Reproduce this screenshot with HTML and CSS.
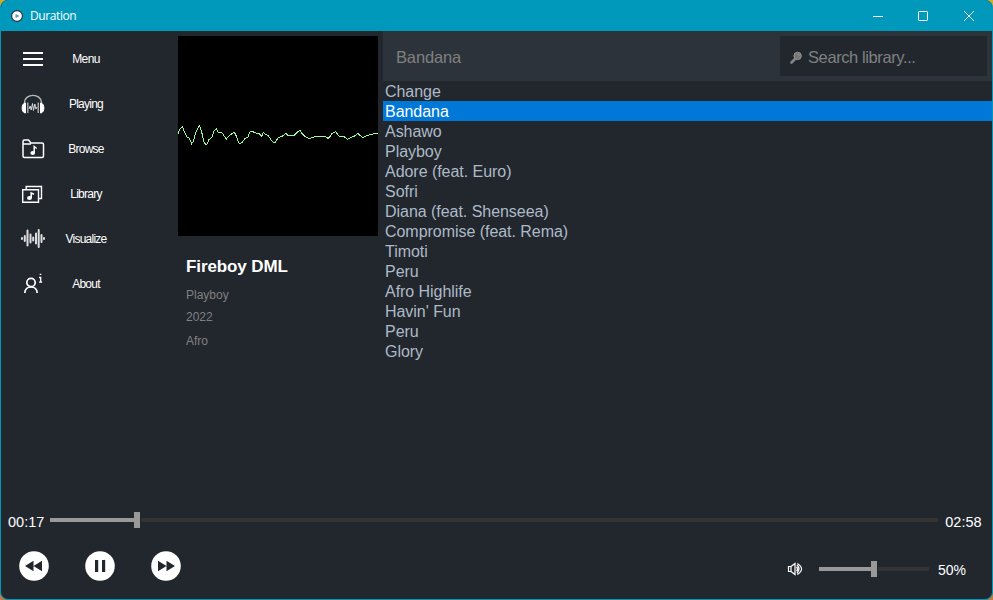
FILE: index.html
```html
<!DOCTYPE html>
<html lang="en">
<head>
<meta charset="utf-8">
<title>Duration</title>
<link rel="stylesheet" href="styles.css">
</head>
<body>
<div class="window">
  <header class="titlebar">
    <svg class="app-icon" width="12" height="12" viewBox="0 0 12 12"><circle cx="6" cy="6" r="5.4" fill="#fff" stroke="#222b33" stroke-width="1.1"/><path d="M4.500 3.700 8.500 6 4.500 8.300Z" fill="#609bc9"/></svg>
    <span class="title">Duration</span>
    <svg class="controls" width="102" height="12" viewBox="0 0 102 12" fill="none" stroke="#fff"><path d="M0 6.500h10"/><rect x="45.500" y="1.500" width="9" height="9" rx=".7"/><path d="M91 1l10 10M101 1l-10 10"/></svg>
  </header>
  <main class="content">
    <nav class="sidebar">
      <a class="nav-item"><svg width="26" height="26" viewBox="0 0 26 26" stroke="#fff" stroke-width="2"><path d="M3 7h20M3 13h20M3 19h20"/></svg><span>Menu</span></a>
      <a class="nav-item"><svg width="26" height="26" viewBox="0 0 26 26" fill="none" stroke="#fff"><path d="M4.500 14v-2.500C5 2 21 2 21.500 11.500V14" stroke="#b5b8bb" stroke-width="1.400"/><path d="M5.500 12c-4.500 0-4.500 10 0 10ZM20.500 12c4.500 0 4.500 10 0 10Z" fill="#fff"/><path d="M7.800 11.500v10.500M18.200 11.500v10.500" stroke="#c5c7c9" stroke-width="1.200"/><path d="M9 18l1.200-3 1 4 1.300-6.500 1 7 1.300-6.500 1.200 5 1-2" stroke="#d5d7d9"/></svg><span>Playing</span></a>
      <a class="nav-item"><svg width="26" height="26" viewBox="0 0 26 26" fill="none" stroke="#fff" stroke-width="1.500"><path d="M3 8V5.500q0-1.500 1.500-1.500h4l2.500 3h11q1.500 0 1.500 1.500v11.500q0 1.500-1.500 1.500h-17.500q-1.500 0-1.500-1.500V8h8"/><ellipse cx="12.700" cy="17" rx="2.300" ry="2" fill="#fff" stroke="none"/><path d="M14.200 17v-6.500l2.500 2"/></svg><span>Browse</span></a>
      <a class="nav-item"><svg width="26" height="26" viewBox="0 0 26 26" fill="none" stroke="#fff" stroke-width="1.400"><path d="M6.200 8.500V5.500h15.300v12h-3M2.700 8.700h15.800v12.600H2.700Z"/><ellipse cx="9.500" cy="17" rx="2.500" ry="2" fill="#fff" stroke="none"/><path d="M11.200 17v-5l2.800 1.200" stroke-width="1.600"/></svg><span>Library</span></a>
      <a class="nav-item"><svg width="26" height="26" viewBox="0 0 26 26" stroke="#ddd" stroke-width="2" stroke-linecap="round"><path d="M2 12v1M4.800 10v5M7.500 4.500v15M10.500 8.500v8M13.200 11.500v3M16 7.500v10M18.700 4v17M21.500 9v7M24 12v1"/></svg><span>Visualize</span></a>
      <a class="nav-item"><svg width="26" height="26" viewBox="0 0 26 26" fill="none" stroke="#fff" stroke-width="1.700"><circle cx="11" cy="11.500" r="4.200"/><path d="M4.800 22c.3-8 12.100-8 12.400 0"/><path d="M19 6.500h1.700v4.700M19 11.200h3.200M19.700 3.300h1.600" stroke-width="1.300"/></svg><span>About</span></a>
    </nav>
    <section class="now-playing">
      <svg class="scope" width="200" height="200" viewBox="12 18 600 600"><polyline fill="none" stroke="#98fb98" stroke-width="3" shape-rendering="crispEdges" points="12,312 18,296 25,290 30,302 38,320 46,325 53,341 58,335 66,305 70,297 76,287 82,302 90,335 95,344 100,342 104,330 114,322 120,303 127,296 133,308 145,309 150,318 157,327 165,318 172,312 181,307 188,320 193,337 198,341 205,337 213,325 222,321 228,305 235,304 242,308 255,311 263,319 268,308 274,313 283,317 290,328 298,337 304,337 311,325 320,320 328,317 335,310 342,317 350,318 360,317 368,308 378,301 385,312 395,321 406,326 415,323 430,318 455,320 462,325 468,320 473,311 485,305 494,318 512,321 520,328 530,323 540,319 552,310 560,318 567,323 580,316 590,314 600,311 612,311"/></svg>
      <h1 class="artist">Fireboy DML</h1>
      <p class="meta">Playboy</p>
      <p class="meta">2022</p>
      <p class="meta genre">Afro</p>
    </section>
    <section class="library">
      <div class="toolbar">
        <span class="current">Bandana</span>
        <div class="search">
          <svg width="12" height="13" viewBox="0 0 12 13"><path d="M1.500 11.500 6 7" stroke="#858585" stroke-width="2.600" stroke-linecap="round"/><circle cx="7.600" cy="4.900" r="3.700" fill="#777" stroke="#929292"/><path d="M7.500 3q2 0 2 2" stroke="#a58b8b" fill="none"/></svg>
          <span>Search library...</span>
        </div>
      </div>
      <ul class="songs">
        <li>Change</li>
        <li class="selected">Bandana</li>
        <li>Ashawo</li>
        <li>Playboy</li>
        <li>Adore (feat. Euro)</li>
        <li>Sofri</li>
        <li>Diana (feat. Shenseea)</li>
        <li>Compromise (feat. Rema)</li>
        <li>Timoti</li>
        <li>Peru</li>
        <li>Afro Highlife</li>
        <li>Havin' Fun</li>
        <li>Peru</li>
        <li>Glory</li>
      </ul>
    </section>
  </main>
  <footer class="player">
    <div class="progress">
      <span class="time">00:17</span>
      <div class="slider seek"><i class="fill"></i><i class="thumb"></i><i class="rest"></i></div>
      <span class="time">02:58</span>
    </div>
    <div class="transport">
      <svg width="30" height="30" viewBox="0 0 30 30"><circle cx="15" cy="15" r="14.800" fill="#fff"/><path d="M6 15l8.500-5.300v10.600ZM14.500 15 23 9.700v10.600Z" fill="#22272e"/></svg>
      <svg width="30" height="30" viewBox="0 0 30 30"><circle cx="15" cy="15" r="14.800" fill="#fff"/><path d="M10 9h3.200v12H10ZM17 9h3.200v12H17Z" fill="#22272e"/></svg>
      <svg width="30" height="30" viewBox="0 0 30 30"><circle cx="15" cy="15" r="14.800" fill="#fff"/><path d="M24 15l-8.500-5.300v10.600ZM15.500 15 7 9.700v10.600Z" fill="#22272e"/></svg>
      <div class="volume">
        <svg width="16" height="14" viewBox="0 0 16 14" fill="none" stroke="#fff" stroke-width="1.200"><path d="M1.500 4.500H4v5H1.500ZM4 4.500l4-3v11l-4-3"/><path d="M9.500 4.800q2.200 2.200 0 4.400M10 3q4 4 0 8M10.300 1.500q8.500 5.500 0 11"/></svg>
        <div class="slider level"><i class="fill"></i><i class="thumb"></i><i class="rest"></i></div>
        <span class="percent">50%</span>
      </div>
    </div>
  </footer>
</div>
</body>
</html>
```
FILE: styles.css
```css
* { box-sizing: border-box; }
body {
  margin: 0;
  background: linear-gradient(#cfae2c, #c87a3c);
  font-family: "Liberation Sans", Arial, sans-serif;
}
h1, p, ul { margin: 0; padding: 0; }
svg { display: block; flex: none; }
.window {
  display: flex;
  flex-direction: column;
  width: 993px;
  height: 600px;
  overflow: hidden;
  border: 1px solid #0099bc;
  border-top: 0;
  border-radius: 8px;
  background: #22272e;
}
.titlebar {
  display: flex;
  align-items: center;
  flex: 0 0 31px;
  padding: 0 17px 0 10px;
  background: #0099bc;
  color: #fff;
}
.title {
  margin-left: 7px;
  font: 12px/16px "Open Sans", sans-serif;
  letter-spacing: -0.4px;
}
.controls { margin-left: auto; }
.content {
  display: grid;
  grid-template-columns: 177px 205px 1fr;
  flex: 0 0 474px;
}
.sidebar { padding-top: 5px; }
.nav-item {
  display: flex;
  align-items: center;
  height: 45px;
  padding-left: 19px;
  color: #fff;
  font-size: 12px;
  letter-spacing: -0.75px;
}
.nav-item span {
  width: 80px;
  text-align: center;
}
.nav-item:first-child { letter-spacing: -0.6px; }
.now-playing { padding-top: 5px; }
.scope { background: #000; }
.artist {
  margin: 20px 0 6px 8px;
  color: #fff;
  font-size: 17px;
  line-height: 22px;
  letter-spacing: -0.1px;
}
.meta {
  margin-left: 8px;
  color: #808080;
  font-size: 12px;
  line-height: 22px;
}
.genre { margin-top: 2px; }
.toolbar {
  display: flex;
  align-items: center;
  justify-content: space-between;
  height: 50px;
  padding: 0 5px 0 13px;
  background: #2d333b;
  color: #808080;
  font-size: 16.5px;
  letter-spacing: -0.15px;
}
.current { padding-top: 2px; }
.search {
  display: flex;
  align-items: center;
  gap: 6px;
  width: 207px;
  height: 40px;
  padding: 2px 10px 0;
  background: #22272e;
  letter-spacing: -0.4px;
}
.songs {
  list-style: none;
  color: #adbac7;
  font-size: 16px;
  line-height: 20px;
  letter-spacing: -0.04px;
}
.songs li {
  height: 20px;
  padding: 1px 0 0 2px;
}
.songs .selected {
  background: #0078d7;
  color: #fff;
}
.progress {
  display: flex;
  align-items: center;
  height: 30px;
  padding: 0 10px 0 7px;
  color: #fff;
  font-size: 14.5px;
}
.time { padding-top: 4px; }
.slider {
  display: flex;
  align-items: center;
  height: 16px;
}
.seek {
  width: 888px;
  margin: 0 7px 0 6px;
}
.fill { height: 4px; background: #999; }
.thumb { width: 6px; height: 16px; background: #999; }
.rest { flex: 1; height: 4px; margin-left: 1px; background: #333; }
.seek .fill { width: 84px; }
.transport {
  display: flex;
  align-items: center;
  gap: 36px;
  height: 62px;
  padding: 0 26px 0 18px;
}
.volume {
  display: flex;
  align-items: center;
  margin-left: auto;
  padding-top: 6px;
  color: #fff;
  font-size: 14px;
}
.level { width: 110px; margin: 0 9px 0 16px; }
.level .fill { width: 52px; }
.percent { padding-top: 2px; }
```
